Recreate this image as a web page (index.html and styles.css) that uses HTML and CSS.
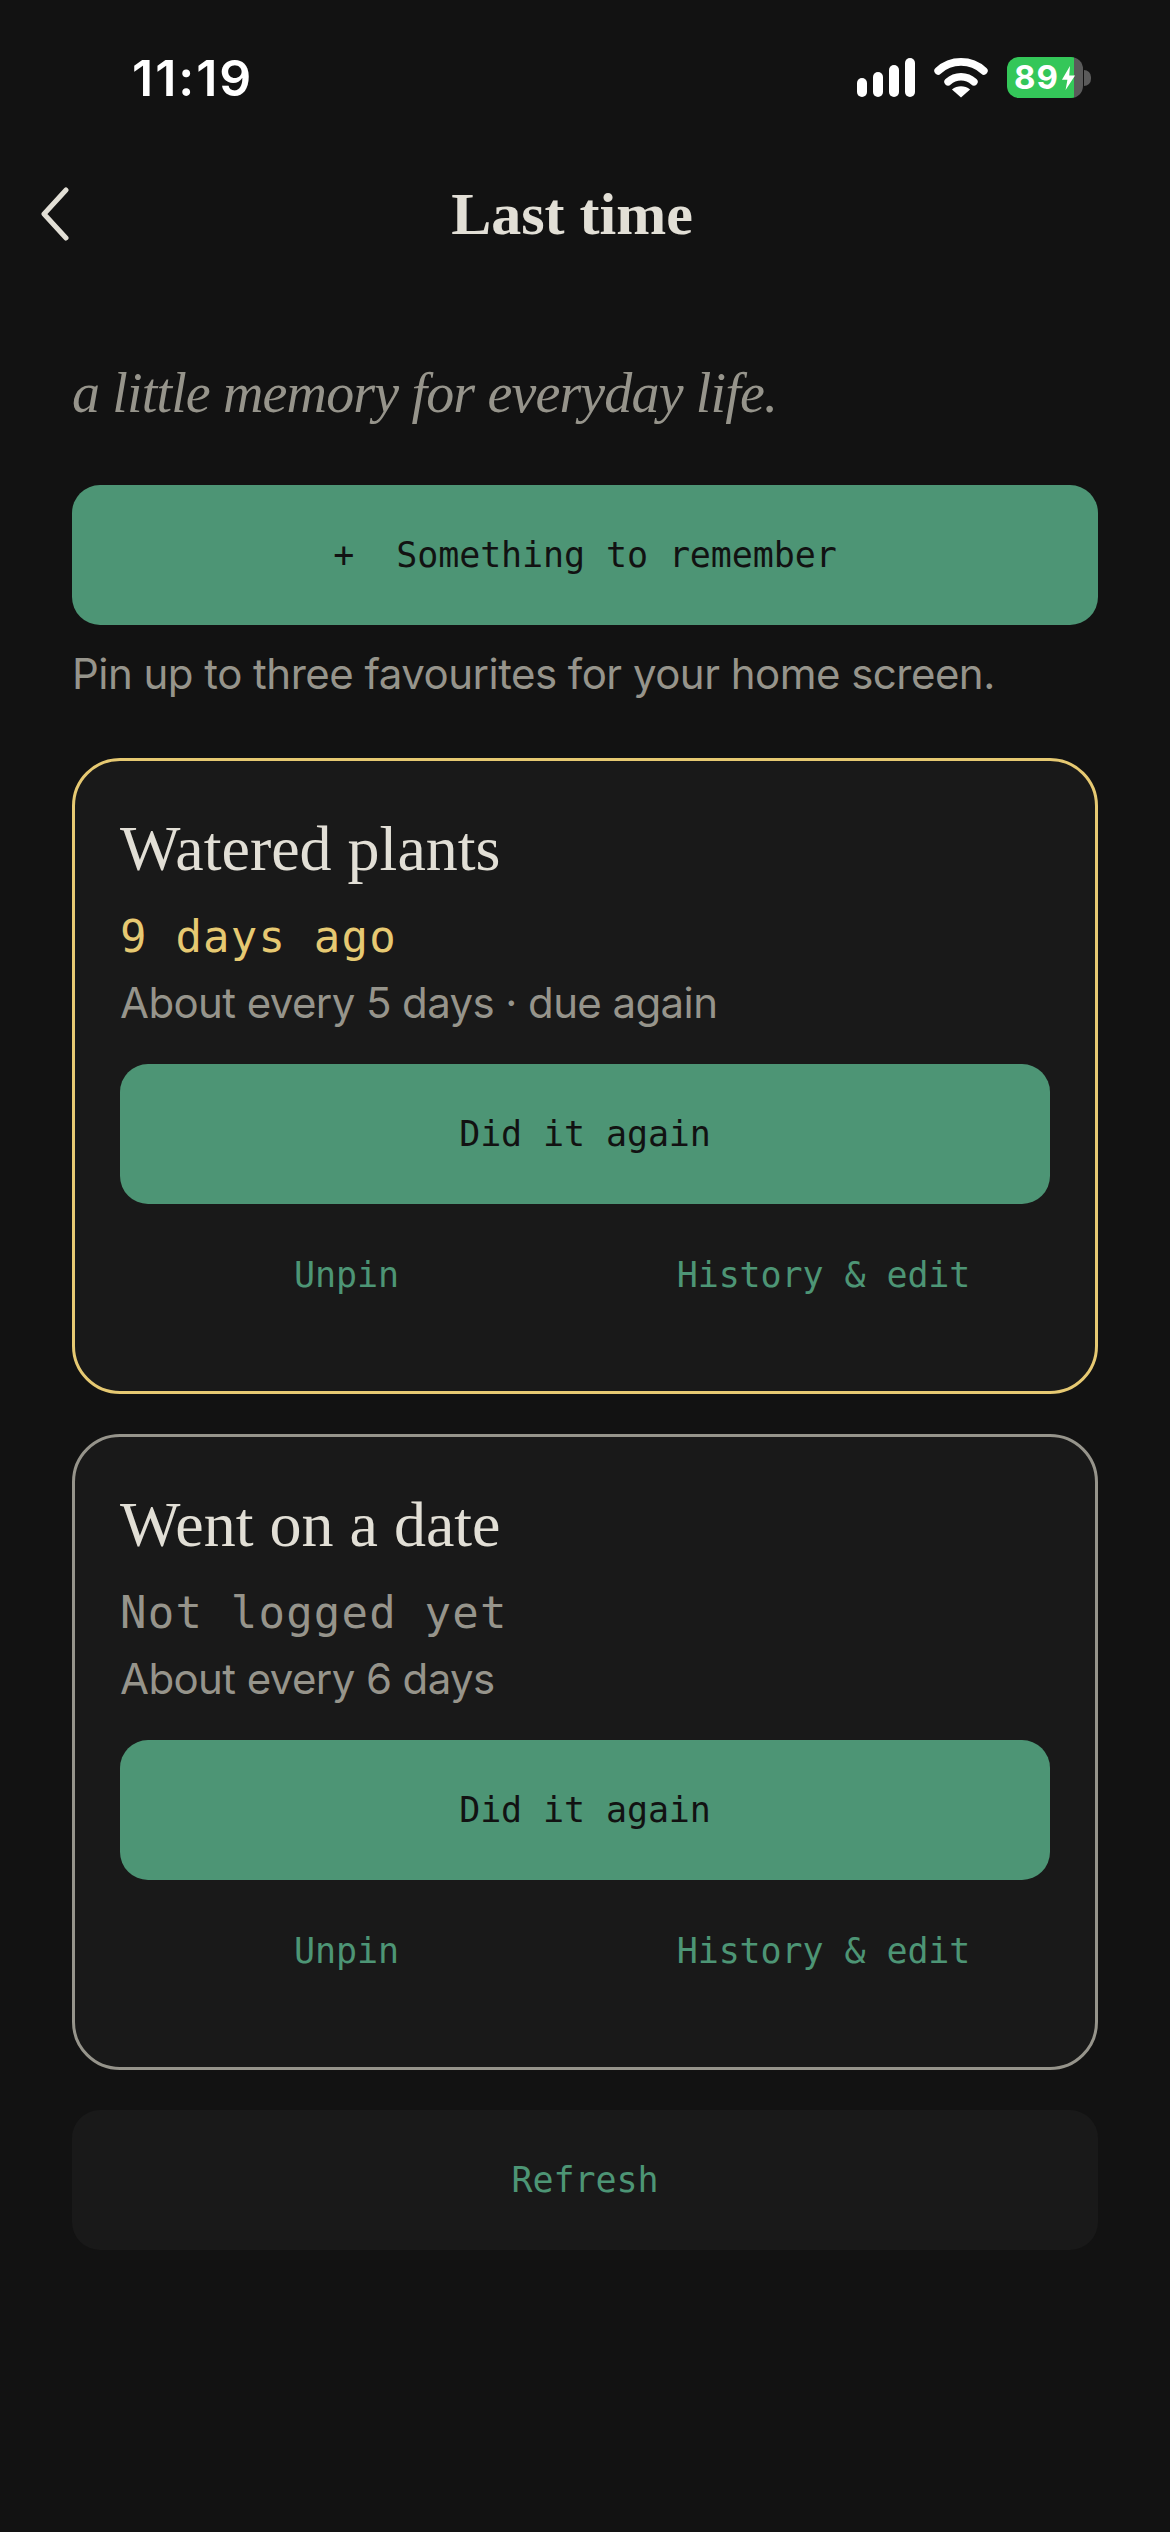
FILE: index.html
```html
<!DOCTYPE html>
<html lang="en">
<head>
<meta charset="utf-8">
<title>Last time</title>
<link rel="stylesheet" href="styles.css">
</head>
<body>
<div class="status">
  <span class="clock">11:19</span>
  <div class="status-icons">
    <svg class="signal" width="58" height="39" viewBox="0 0 58 39"><rect x="0" y="20" width="10" height="19" rx="5"/><rect x="16" y="14" width="10" height="25" rx="5"/><rect x="32" y="7" width="10" height="32" rx="5"/><rect x="48" y="0" width="10" height="39" rx="5"/></svg>
    <svg class="wifi" width="54" height="40" viewBox="0 0 56 42"><path d="M4 13.500C17.500 1 38.500 1 52 13.500" class="arc"/><path d="M14.500 25C22 18 34 18 41.500 25" class="arc"/><path d="M28 41.500L18.500 33C24 28.500 32 28.500 37.500 33Z"/></svg>
    <div class="battery">
      <div class="battery-body"><span class="battery-num">89</span><svg class="bolt" width="17" height="24" viewBox="0 0 18 33"><path d="M11 0L0 19H7.500L5 33L18 13H10Z"/></svg></div>
      <div class="battery-cap"></div>
    </div>
  </div>
</div>

<header class="nav">
  <svg class="back" width="32" height="54" viewBox="0 0 32 54"><path d="M28 3L6 27L28 51"/></svg>
  <h1 class="title">Last time</h1>
</header>

<main class="content">
  <p class="tagline">a little memory for everyday life.</p>
  <button class="btn btn-primary add">+&nbsp;&nbsp;Something to remember</button>
  <p class="hint">Pin up to three favourites for your home screen.</p>

  <section class="card card-due">
    <h2 class="card-title">Watered plants</h2>
    <div class="ago ago-due">9 days ago</div>
    <div class="freq">About every 5 days · due again</div>
    <button class="btn btn-primary">Did it again</button>
    <div class="links"><a class="link">Unpin</a><a class="link">History &amp; edit</a></div>
  </section>

  <section class="card card-idle">
    <h2 class="card-title">Went on a date</h2>
    <div class="ago ago-idle">Not logged yet</div>
    <div class="freq">About every 6 days</div>
    <button class="btn btn-primary">Did it again</button>
    <div class="links"><a class="link">Unpin</a><a class="link">History &amp; edit</a></div>
  </section>

  <button class="btn btn-ghost">Refresh</button>
</main>
</body>
</html>
```
FILE: styles.css
```css
* { box-sizing: border-box; }
html, body { margin: 0; padding: 0; }
body {
  width: 1170px;
  height: 2532px;
  overflow: hidden;
  background: #121212;
  color: #e2dfd6;
  font-family: "Inter", sans-serif;
}
.status {
  height: 165px;
  padding: 53px 79px 0 132px;
  display: flex;
  justify-content: space-between;
  align-items: flex-start;
}
.clock {
  font-family: "Inter", sans-serif;
  font-size: 50px;
  line-height: 50px;
  font-weight: 600;
  color: #fff;
  letter-spacing: 2px;
}
.status-icons { display: flex; align-items: center; gap: 19px; height: 41px; margin-top: 4px; }
.signal rect { fill: #fff; }
.wifi path { fill: #fff; }
.wifi .arc { fill: none; stroke: #fff; stroke-width: 8; stroke-linecap: round; }
.battery { display: flex; align-items: center; gap: 1px; }
.battery-body {
  width: 76px;
  height: 41px;
  border-radius: 12px;
  background: linear-gradient(90deg, #34c759 0 67px, #5a5a5a 67px);
  display: flex;
  align-items: center;
  padding-left: 7px;
  gap: 1px;
}
.battery-num { font-family: "Inter", sans-serif; font-size: 33px; line-height: 41px; font-weight: 700; color: #fff; letter-spacing: 1px; }
.bolt path { fill: #fff; }
.battery-cap { width: 7px; height: 16px; background: #5a5a5a; border-radius: 0 8px 8px 0; }

.nav {
  height: 98px;
  display: flex;
  align-items: center;
  padding: 0 96px 0 38px;
}
.back { flex: none; }
.back path { fill: none; stroke: #e2dfd6; stroke-width: 5; stroke-linecap: round; stroke-linejoin: round; }
.title {
  flex: 1;
  margin: 0;
  text-align: center;
  font-family: "Liberation Serif", serif;
  font-size: 60px;
  line-height: 70px;
  font-weight: 700;
  color: #e2dfd6;
}
.content { padding: 0 72px; display: flex; flex-direction: column; }
.tagline {
  margin: 113px 0 0;
  height: 35px;
  font-family: "Liberation Serif", serif;
  font-style: italic;
  font-size: 56px;
  line-height: 35px;
  letter-spacing: -0.85px;
  color: #96948b;
  white-space: nowrap;
}
.btn {
  display: block;
  width: 100%;
  height: 140px;
  border: 0;
  border-radius: 28px;
  font-family: "DejaVu Sans Mono", monospace;
  font-size: 35px;
  letter-spacing: -0.1px;
  padding: 0;
}
.btn-primary { background: #4d9575; color: #121212; }
.add { margin-top: 74px; }
.hint {
  margin: 24px 0 0;
  font-size: 42px;
  line-height: 50px;
  letter-spacing: -0.52px;
  color: #96948b;
}
.card {
  margin-top: 59px;
  height: 636px;
  background: #191919;
  border: 3px solid #e6c972;
  border-radius: 48px;
  padding: 45px;
}
.card-idle { margin-top: 40px; border-color: #96948b; }
.card-title {
  margin: 8px 0 0;
  font-family: "Liberation Serif", serif;
  font-size: 64px;
  line-height: 70px;
  font-weight: 400;
  color: #e2dfd6;
}
.ago {
  margin-top: 28px;
  font-family: "DejaVu Sans Mono", monospace;
  font-size: 44px;
  line-height: 50px;
  letter-spacing: 1.2px;
}
.ago-due { color: #e6c972; }
.ago-idle { color: #96948b; }
.freq {
  margin-top: 16px;
  font-size: 42px;
  line-height: 50px;
  letter-spacing: -0.6px;
  color: #96948b;
}
.card .btn { margin-top: 36px; }
.links {
  margin-top: 41px;
  display: grid;
  grid-template-columns: 1fr 1fr;
  gap: 24px;
  text-align: center;
}
.link {
  font-family: "DejaVu Sans Mono", monospace;
  font-size: 35px;
  letter-spacing: -0.1px;
  line-height: 60px;
  color: #4d9575;
}
.btn-ghost {
  margin-top: 40px;
  background: #191919;
  color: #4d9575;
}
```
